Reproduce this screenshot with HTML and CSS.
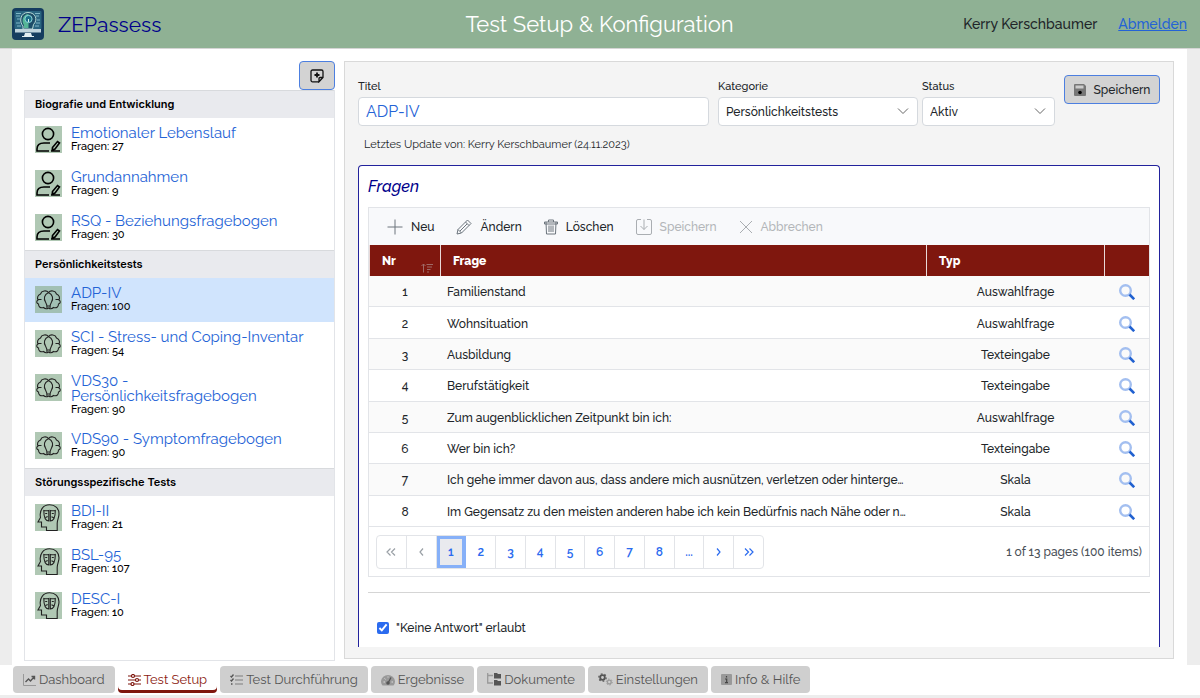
FILE: index.html
```
<!DOCTYPE html>
<html lang="de">
<head>
  <meta charset="UTF-8">
  <meta name="viewport" content="width=device-width, initial-scale=1.0">
  <title>ZEPassess - Test Setup</title>
  <link rel="stylesheet" href="styles.css">
</head>
<body>

  <!-- shared icons -->
  <svg class="symbols" aria-hidden="true">
    <symbol id="icon-person" viewBox="0 0 27 27">
      <circle cx="13" cy="8" r="5.6"/>
      <path d="M14 25H2v-2c0-4 3-6 7-6h6M16 25h9M17.500 21.500l5-6 2 1.500-4.500 6-2.800 1z"/>
    </symbol>
    <symbol id="icon-brain" viewBox="0 0 27 27">
      <path d="M13.500 6.500C11.500 4 6.500 4.500 5.500 8c-3 1-3.500 4-2.500 6-2 1-1.500 3.500.5 4 0 3 2 4.500 5 3.500 1.500 1.500 3.500 1.500 5 .5 1.500 1 3.500 1 5-.5 3 1 5-.5 5-3.500 2-.5 2.500-3 .5-4 1-2 .5-5-2.500-6-1-3.500-6-4-8-1.500z"/>
      <path d="M13.500 6.500c-4.500 2-5 6.500-3 9.500 1 1.500 1.500 3 1.500 6M13.500 6.500c4.500 2 5 6.500 3 9.500-1 1.500-1.500 3-1.500 6M3 13.500h3.500M20.500 13.500H24M12.500 20h2"/>
    </symbol>
    <symbol id="icon-mask" viewBox="0 0 27 27">
      <path d="M11.500 26.500v-3.500H6.500v-5H3l2.500-4.500C4 6 8.500.8 14.500.8c6 0 9.500 4 9.500 9 0 4-1.800 6-1.800 9.500v7.200z"/>
      <path d="M8.800 6.500c2 .5 3 .5 5 0v10.500c-4 0-5-4-5-10.500zM20.300 6.500c-2 .5-3 .5-5 0v10.500c4 0 5-4 5-10.500zM10.200 9.500h2M10.500 13.500l2.200-1M16.800 9.500h2M16.500 12.800l2.200 1"/>
    </symbol>
    <symbol id="icon-search" viewBox="0 0 16 16">
      <circle cx="6.500" cy="6.500" r="5.300" fill="none" stroke="#a3bff0" stroke-width="2.400"/>
      <path d="M10.500 10.500l4.700 4.700" stroke="#2161d0" stroke-width="2.600"/>
    </symbol>
  </svg>

  <header class="topbar">
    <div class="brand">
      <svg class="logo" viewBox="0 0 32 32" aria-hidden="true">
        <rect width="32" height="32" rx="4" fill="#153d5f"/>
        <rect x="2.500" y="3" width="27" height="18" rx="1" fill="#2a6580"/>
        <path d="M4 5.500h5M4 8h4M5 11h3M4 15h4M5 18h4M23 5.500h5M24 8h3M25 12h3M24 15h4M23 18h4" stroke="#7fb7c7" stroke-width="1"/>
        <path d="M11 21v-3C7 14 8 4.500 16 4.500s10 7.500 5.500 12l-1 4.500z" fill="#1d4d68" stroke="#b9dbd6" stroke-width="1"/>
        <path d="M12 20v-3c-3-4-1-11 4.500-11v14z" fill="#55b596"/>
        <circle cx="16.500" cy="11" r="3.600" fill="#1a6f88" stroke="#8fd8dc"/>
        <path d="M16.500 11v3" stroke="#d9f2ee"/>
        <rect x="3" y="21" width="26" height="3.500" fill="#bfd3dc"/>
        <path d="M13 25h6l1 3h2v1H10v-1h2z" fill="#e2eef2"/>
      </svg>
      <span class="brand-name">ZEPassess</span>
    </div>
    <h1>Test Setup &amp; Konfiguration</h1>
    <div class="user">
      <span>Kerry Kerschbaumer</span>
      <a href="#">Abmelden</a>
    </div>
  </header>

  <main class="content">
    <aside class="sidebar">
      <button type="button" class="btn btn-add" aria-label="Neuer Test">
        <svg width="14" height="14" viewBox="0 0 14 14" fill="none" stroke="#111" stroke-width="1.300">
          <path d="M8.500 12.800H2.500a1.500 1.500 0 0 1-1.500-1.500V2.500A1.500 1.500 0 0 1 2.500 1h9A1.500 1.500 0 0 1 13 2.500v6l-4 4.300V9.500a1 1 0 0 1 1-1h3"/>
          <path d="M7 3.500v5M4.500 6h5" stroke-width="1.800"/>
        </svg>
      </button>

      <nav class="tests">
        <section>
          <h2>Biografie und Entwicklung</h2>
          <a href="#" class="test"><svg class="thumb thumb-bold"><use href="#icon-person"/></svg><span><b>Emotionaler Lebenslauf</b><small>Fragen: 27</small></span></a>
          <a href="#" class="test"><svg class="thumb thumb-bold"><use href="#icon-person"/></svg><span><b>Grundannahmen</b><small>Fragen: 9</small></span></a>
          <a href="#" class="test"><svg class="thumb thumb-bold"><use href="#icon-person"/></svg><span><b>RSQ - Beziehungsfragebogen</b><small>Fragen: 30</small></span></a>
        </section>
        <section>
          <h2>Persönlichkeitstests</h2>
          <a href="#" class="test selected"><svg class="thumb"><use href="#icon-brain"/></svg><span><b>ADP-IV</b><small>Fragen: 100</small></span></a>
          <a href="#" class="test"><svg class="thumb"><use href="#icon-brain"/></svg><span><b>SCI - Stress- und Coping-Inventar</b><small>Fragen: 54</small></span></a>
          <a href="#" class="test"><svg class="thumb"><use href="#icon-brain"/></svg><span><b>VDS30 -<br>Persönlichkeitsfragebogen</b><small>Fragen: 90</small></span></a>
          <a href="#" class="test"><svg class="thumb"><use href="#icon-brain"/></svg><span><b>VDS90 - Symptomfragebogen</b><small>Fragen: 90</small></span></a>
        </section>
        <section>
          <h2>Störungsspezifische Tests</h2>
          <a href="#" class="test"><svg class="thumb"><use href="#icon-mask"/></svg><span><b>BDI-II</b><small>Fragen: 21</small></span></a>
          <a href="#" class="test"><svg class="thumb"><use href="#icon-mask"/></svg><span><b>BSL-95</b><small>Fragen: 107</small></span></a>
          <a href="#" class="test"><svg class="thumb"><use href="#icon-mask"/></svg><span><b>DESC-I</b><small>Fragen: 10</small></span></a>
        </section>
      </nav>
    </aside>

    <div class="editor">
      <form class="fields">
        <div class="field field-title">
          <label for="title">Titel</label>
          <input type="text" id="title" value="ADP-IV">
        </div>
        <div class="field field-category">
          <label for="category">Kategorie</label>
          <select id="category"><option>Persönlichkeitstests</option></select>
        </div>
        <div class="field field-status">
          <label for="status">Status</label>
          <select id="status"><option>Aktiv</option></select>
        </div>
        <button type="button" class="btn btn-save">
          <svg width="12" height="12" viewBox="0 0 12 12">
            <path d="M1 0h9l2 2v9a1 1 0 0 1-1 1H1a1 1 0 0 1-1-1V1a1 1 0 0 1 1-1z" fill="#777"/>
            <path d="M1.500 1.500h8v3h-8z" fill="#ccc"/>
            <circle cx="6" cy="8.500" r="1.800" fill="#000"/>
          </svg>
          Speichern
        </button>
      </form>
      <p class="updated">Letztes Update von: Kerry Kerschbaumer (24.11.2023)</p>

      <section class="questions">
        <h3>Fragen</h3>
        <div class="grid">
          <div class="toolbar">
            <button type="button"><svg width="16" height="16" viewBox="0 0 16 16"><path d="M8 .5v15M.5 8h15"/></svg>Neu</button>
            <button type="button"><svg width="16" height="16" viewBox="0 0 16 16"><path d="M1 15l1-4.500L11.500 1l3.500 3.500L5.500 14zM9.500 3l3.500 3.500M2 10.500L5.500 14M4 12l7-7"/></svg>Ändern</button>
            <button type="button"><svg width="14" height="16" viewBox="0 0 14 16"><path d="M.5 3h13M4.500 3V1h5v2M2 3l.5 12h9L12 3M.5 3v2h13V3M5 6.500v6.500M7 6.500v6.500M9 6.500v6.500"/></svg>Löschen</button>
            <button type="button" disabled><svg width="16" height="16" viewBox="0 0 16 16"><path d="M5 .5H2A1.500 1.500 0 0 0 .5 2v12A1.500 1.500 0 0 0 2 15.500h12a1.500 1.500 0 0 0 1.500-1.500V2A1.500 1.500 0 0 0 14 .5h-3M8 .5v10M4.500 7L8 10.500 11.500 7"/></svg>Speichern</button>
            <button type="button" disabled><svg width="14" height="14" viewBox="0 0 14 14"><path d="M1 1l12 12M13 1L1 13"/></svg>Abbrechen</button>
          </div>

          <table>
            <colgroup>
              <col class="col-nr">
              <col>
              <col class="col-type">
              <col class="col-open">
            </colgroup>
            <thead>
              <tr>
                <th>
                  <div class="sortable">Nr
                    <svg width="12" height="10" viewBox="0 0 12 10"><path d="M2.500 9.500V1M.5 3l2-2 2 2M5.500 1.500H12M6 4h5M6 6.500h3.500M6 9h2"/></svg>
                  </div>
                </th>
                <th>Frage</th>
                <th>Typ</th>
                <th></th>
              </tr>
            </thead>
            <tbody>
              <tr><td>1</td><td>Familienstand</td><td>Auswahlfrage</td><td><button type="button" aria-label="Öffnen"><svg><use href="#icon-search"/></svg></button></td></tr>
              <tr><td>2</td><td>Wohnsituation</td><td>Auswahlfrage</td><td><button type="button" aria-label="Öffnen"><svg><use href="#icon-search"/></svg></button></td></tr>
              <tr><td>3</td><td>Ausbildung</td><td>Texteingabe</td><td><button type="button" aria-label="Öffnen"><svg><use href="#icon-search"/></svg></button></td></tr>
              <tr><td>4</td><td>Berufstätigkeit</td><td>Texteingabe</td><td><button type="button" aria-label="Öffnen"><svg><use href="#icon-search"/></svg></button></td></tr>
              <tr><td>5</td><td>Zum augenblicklichen Zeitpunkt bin ich:</td><td>Auswahlfrage</td><td><button type="button" aria-label="Öffnen"><svg><use href="#icon-search"/></svg></button></td></tr>
              <tr><td>6</td><td>Wer bin ich?</td><td>Texteingabe</td><td><button type="button" aria-label="Öffnen"><svg><use href="#icon-search"/></svg></button></td></tr>
              <tr><td>7</td><td>Ich gehe immer davon aus, dass andere mich ausnützen, verletzen oder hinterge…</td><td>Skala</td><td><button type="button" aria-label="Öffnen"><svg><use href="#icon-search"/></svg></button></td></tr>
              <tr><td>8</td><td>Im Gegensatz zu den meisten anderen habe ich kein Bedürfnis nach Nähe oder n…</td><td>Skala</td><td><button type="button" aria-label="Öffnen"><svg><use href="#icon-search"/></svg></button></td></tr>
            </tbody>
          </table>

          <div class="pager">
            <div class="pages">
              <button type="button" disabled aria-label="Erste Seite"><svg width="10" height="8" viewBox="0 0 10 8"><path d="M4.500.5L1 4l3.500 3.500M9 .5L5.500 4 9 7.500"/></svg></button>
              <button type="button" disabled aria-label="Vorherige Seite"><svg width="5" height="8" viewBox="0 0 5 8"><path d="M4 .5L1 4l3 3.500"/></svg></button>
              <button type="button" class="current">1</button>
              <button type="button">2</button>
              <button type="button">3</button>
              <button type="button">4</button>
              <button type="button">5</button>
              <button type="button">6</button>
              <button type="button">7</button>
              <button type="button">8</button>
              <button type="button">...</button>
              <button type="button" aria-label="Nächste Seite"><svg width="5" height="8" viewBox="0 0 5 8"><path d="M1 .5L4 4 1 7.500"/></svg></button>
              <button type="button" aria-label="Letzte Seite"><svg width="10" height="8" viewBox="0 0 10 8"><path d="M1 .5L4.500 4 1 7.500M5.500.5L9 4 5.500 7.500"/></svg></button>
            </div>
            <span>1 of 13 pages (100 items)</span>
          </div>
        </div>

        <hr>
        <label class="check"><input type="checkbox" checked> "Keine Antwort" erlaubt</label>
      </section>
    </div>
  </main>

  <nav class="tabs">
    <a href="#"><svg width="13" height="12" viewBox="0 0 13 12"><path d="M.5 0v11.500H13" fill="none" stroke="#999"/><path d="M2.500 8l3-3 2 2 3.500-4M8.500 2.500H11.500V5.500" fill="none" stroke="#555" stroke-width="1.400"/></svg>Dashboard</a>
    <a href="#" class="active"><svg width="13" height="12" viewBox="0 0 13 12" fill="#fff" stroke="#7f170e" stroke-width="1.200"><path d="M0 2h13M0 6h13M0 10h13"/><circle cx="5" cy="2" r="1.500"/><circle cx="9" cy="6" r="1.500"/><circle cx="4.500" cy="10" r="1.500"/></svg>Test Setup</a>
    <a href="#"><svg width="13" height="12" viewBox="0 0 13 12" fill="none"><path d="M5 2h8M5 6h8M5 10h8" stroke="#999" stroke-width="1.400"/><path d="M.5 2l1 1 2-2.500M.5 6l1 1 2-2.500M1 10h1.500" stroke="#555" stroke-width="1.300"/></svg>Test Durchführung</a>
    <a href="#"><svg width="14" height="12" viewBox="0 0 14 12"><path d="M1.500 11.500A7 6.500 0 1 1 12.500 11.500z" fill="#999"/><circle cx="7" cy="9" r="1.800" fill="#555"/><path d="M7 9l3-5.500" stroke="#555" stroke-width="1.300"/><path d="M2.500 8h1.500M3.500 4.500l1 .8M7 2.500v1M10.500 8H12" stroke="#ddd"/></svg>Ergebnisse</a>
    <a href="#"><svg width="14" height="13" viewBox="0 0 14 13"><path d="M.7 0v10H6M.7 2.500H6" fill="none" stroke="#999" stroke-width="1.300"/><path d="M7 0h3l1 1h3v4.500H7zM7 7h3l1 1h3v4.500H7z" fill="#555"/></svg>Dokumente</a>
    <a href="#"><svg width="15" height="13" viewBox="0 0 15 13" fill="none"><circle cx="4.500" cy="4.500" r="2.300" stroke="#555" stroke-width="1.800"/><circle cx="4.500" cy="4.500" r="3.700" stroke="#555" stroke-width="1.200" stroke-dasharray="1.800 2"/><circle cx="11.300" cy="9" r="1.900" stroke="#999" stroke-width="1.300"/><circle cx="11.300" cy="9" r="3" stroke="#999" stroke-dasharray="1.400 1.700"/></svg>Einstellungen</a>
    <a href="#"><svg width="11" height="11" viewBox="0 0 11 11"><rect width="11" height="11" rx="1" fill="#999"/><path d="M5.500 2v1.600M4 5h1.700v3.500M4 8.700h3" fill="none" stroke="#444" stroke-width="1.200"/></svg>Info &amp; Hilfe</a>
  </nav>

</body>
</html>
```
FILE: styles.css
```
* {
  box-sizing: border-box;
}

body {
  margin: 0;
  min-height: 100vh;
  display: flex;
  flex-direction: column;
  font-family: Raleway, Lato, sans-serif;
  font-size: 12px;
  font-weight: 500;
  color: #212529;
  background: #ededed;
}

button,
input,
select {
  font-family: inherit;
  font-size: inherit;
  font-weight: inherit;
  color: inherit;
}

a {
  color: #2463d6;
}

.symbols {
  display: none;
}

/* Header */
.topbar {
  height: 49px;
  display: grid;
  grid-template-columns: 1fr auto 1fr;
  align-items: center;
  padding: 0 13px 0 12px;
  background: #8fb194;
  border-bottom: 1px solid #d5d5d5;
}

.topbar h1 {
  margin: 0;
  font-size: 22px;
  font-weight: 400;
  color: #fff;
}

.brand {
  display: flex;
  align-items: center;
  gap: 14px;
}

.brand-name {
  font-size: 21px;
  font-weight: 400;
  color: #00008b;
}

.logo {
  width: 32px;
  height: 32px;
}

.user {
  display: flex;
  justify-content: flex-end;
  gap: 21px;
  font-size: 14px;
}

/* Content */
.content {
  flex: 1;
  display: flex;
  gap: 9px;
  margin: 0 13px 0 12px;
  padding: 12px 13px 4px 12px;
  background: #fff;
}

.sidebar {
  flex: 0 0 311px;
  display: flex;
  flex-direction: column;
}

.btn {
  height: 29px;
  border: 1px solid #4c7fe0;
  border-radius: 4px;
  background: #d3d3d3;
  display: flex;
  align-items: center;
  justify-content: center;
}

.btn-add {
  align-self: flex-end;
  width: 36px;
  padding: 0;
}

.tests {
  flex: 1;
  border: 1px solid #e2e4e8;
  border-top: 0;
}

.tests h2 {
  margin: 0;
  height: 28px;
  padding: 0 10px;
  border-top: 1px solid #d8dadd;
  background: #e9eaee;
  font: 600 11px/26px Inter, sans-serif;
  color: #000;
}

.test {
  display: flex;
  gap: 9px;
  padding: 8px 10px;
  min-height: 44px;
  text-decoration: none;
}

.selected {
  background: #d0e4fd;
}

.test b,
.test small {
  display: block;
}

.test b {
  font-size: 15px;
  line-height: 15px;
  font-weight: 400;
}

.test small {
  font-size: 11px;
  line-height: 12px;
  color: #000;
}

.thumb {
  flex: none;
  width: 27px;
  height: 27px;
  background: rgba(143, 177, 148, 0.7);
  fill: none;
  stroke: #222;
  stroke-width: 1.1;
}

.thumb-bold {
  stroke: #000;
  stroke-width: 1.6;
}

/* Editor */
.editor {
  flex: 1;
  min-width: 0;
  display: flex;
  flex-direction: column;
  margin-bottom: 2px;
  padding: 13px 13px 11px;
  background: #f4f4f4;
  border: 1px solid #d9d9d9;
}

.fields {
  display: flex;
  gap: 4px;
}

.field {
  display: flex;
  flex-direction: column;
  padding-top: 4px;
}

.field label {
  font-size: 11px;
  line-height: 16px;
  margin-bottom: 2px;
}

.field input,
.field select {
  height: 29px;
  padding: 0 7px;
  border: 1px solid #d5d9de;
  border-radius: 4px;
  background: #fff;
}

.field input {
  font-size: 16px;
  font-weight: 400;
  color: #2463d6;
}

.field select {
  appearance: none;
  background: #fff url("data:image/svg+xml,%3Csvg xmlns='http://www.w3.org/2000/svg' width='12' height='7'%3E%3Cpath d='M1 .5l5 5 5-5' fill='none' stroke='%23666'/%3E%3C/svg%3E") no-repeat right 8px center;
}

.field-title {
  flex: 1;
  margin-right: 5px;
}

.field-category {
  width: 200px;
}

.field-status {
  width: 133px;
}

.btn-save {
  width: 96px;
  margin-left: 5px;
  padding: 0;
  gap: 8px;
}

.updated {
  margin: 10px 0 12px 6px;
  font-size: 11px;
  font-weight: 400;
  line-height: 17px;
}

/* Question list */
.questions {
  flex: 1;
  padding: 11px 9px 0;
  background: #fff;
  border: 1px solid #22229c;
  border-bottom: 0;
  border-radius: 4px 4px 0 0;
}

.questions h3 {
  margin: 0 0 10px;
  font-size: 16px;
  line-height: 20px;
  font-weight: 500;
  font-style: italic;
  color: #00008b;
}

.grid {
  border: 1px solid #e2e4e8;
}

.toolbar {
  display: flex;
  align-items: center;
  gap: 22px;
  height: 37px;
  padding: 0 18px;
  background: #f8f9fb;
}

.toolbar button {
  display: flex;
  align-items: center;
  gap: 8px;
  padding: 0;
  border: 0;
  background: none;
}

.toolbar svg {
  fill: none;
  stroke: #6c757d;
}

.toolbar button:disabled {
  color: #b3b6b9;
}

.toolbar button:disabled svg {
  stroke: #aaaeb2;
}

.grid table {
  width: 100%;
  height: 282px;
  border-collapse: separate;
  border-spacing: 0;
  table-layout: fixed;
}

.col-nr {
  width: 71px;
}

.col-type {
  width: 178px;
}

.col-open {
  width: 45px;
}

.grid th {
  height: 31px;
  padding: 0 12px;
  text-align: left;
  font-weight: 800;
  color: #fff;
  background: #7f170e;
  border-left: 1px solid #e9d9d8;
}

.sortable {
  display: flex;
  justify-content: space-between;
  margin-right: -5px;
}

.sortable svg {
  align-self: flex-end;
  margin-bottom: -5px;
  fill: none;
  stroke: #a06a66;
}

.grid td {
  padding: 2px 6px 0 7px;
  text-align: center;
  border-bottom: 1px solid #e2e4e8;
}

.grid td:nth-child(2) {
  text-align: left;
  white-space: nowrap;
  overflow: hidden;
  text-overflow: ellipsis;
}

.grid tbody tr:nth-child(odd) {
  background: #fafafa;
}

.grid td button {
  display: block;
  margin: 0 auto;
  padding: 0;
  border: 0;
  background: none;
}

.grid td svg {
  display: block;
  width: 16px;
  height: 16px;
}

/* Pager */
.pager {
  display: flex;
  justify-content: space-between;
  align-items: center;
  height: 49px;
  padding: 0 7px;
  color: #495057;
}

.pages {
  display: flex;
  width: 388px;
  border: 1px solid #e2e4e8;
  border-radius: 4px;
}

.pages button {
  flex: 1;
  height: 32px;
  padding: 0;
  border: 0;
  border-right: 1px solid #e2e4e8;
  background: none;
  font-weight: 600;
  color: #2b6bef;
}

.pages button:last-child {
  border-right: 0;
}

.pages button:disabled {
  color: #9aa0a6;
}

.pages svg {
  fill: none;
  stroke: currentColor;
  stroke-width: 1.2;
}

.pages .current {
  border-right-color: #86b0f8;
  background: #e9eaee;
  box-shadow: inset 0 0 0 3px #86b0f8;
}

hr {
  margin: 15px 0 0;
  border: 0;
  border-top: 1px solid #d5d5d5;
}

.check {
  display: inline-flex;
  align-items: center;
  gap: 7px;
  margin: 28px 9px 0;
}

.check input {
  width: 12px;
  height: 12px;
  margin: 0;
  accent-color: #2b6bef;
}

/* Bottom tabs */
.tabs {
  display: flex;
  gap: 3px;
  height: 33px;
  padding: 1px 13px 2px;
  background: #fff;
  border-bottom: 3px solid #ededed;
  font-size: 13px;
  font-weight: 400;
}

.tabs a {
  display: flex;
  align-items: center;
  gap: 3px;
  padding: 0 10px;
  border-radius: 4px;
  background: #cfcfcf;
  color: #555;
  text-decoration: none;
}

.tabs .active {
  background: #fff;
  color: #8b1a10;
  box-shadow: inset 0 -3px #7f170e;
}
```
